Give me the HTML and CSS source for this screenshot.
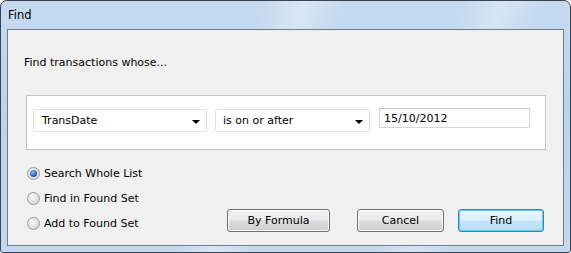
FILE: index.html
```html
<!DOCTYPE html>
<html lang="en">
<head>
  <meta charset="UTF-8" />
  <title>Find</title>
  <link rel="stylesheet" href="styles.css">
</head>
<body>
  <div class="window">
    <div class="titlebar">Find</div>
    <div class="client">
      <p class="prompt">Find transactions whose...</p>

      <div class="criteria">
        <div class="combo field-combo">
          <span>TransDate</span>
          <span class="arrow"></span>
        </div>
        <div class="combo op-combo">
          <span>is on or after</span>
          <span class="arrow"></span>
        </div>
        <div class="textbox">15/10/2012</div>
      </div>

      <div class="bottom">
        <div class="radios">
          <label class="radio checked"><span class="dot"></span>Search Whole List</label>
          <label class="radio"><span class="dot"></span>Find in Found Set</label>
          <label class="radio"><span class="dot"></span>Add to Found Set</label>
        </div>
        <div class="buttons">
          <button class="btn formula">By Formula</button>
          <button class="btn cancel">Cancel</button>
          <button class="btn default">Find</button>
        </div>
      </div>
    </div>
  </div>
</body>
</html>
```

FILE: styles.css
```css
body {
  margin: 0;
  background: #fff;
  font-family: "DejaVu Sans", sans-serif;
  font-size: 11px;
  color: #000;
}
.window {
  width: 571px;
  height: 253px;
  box-sizing: border-box;
  border: 1px solid #3c4350;
  border-radius: 7px 7px 3px 3px;
  padding: 0 6px 6px 6px;
  background:
    linear-gradient(110deg, transparent 0 40%, rgba(255,255,255,0.35) 46%, transparent 52%, transparent 70%, rgba(255,255,255,0.3) 76%, transparent 82%),
    linear-gradient(180deg, #c6dbf0 0%, #bcd3ec 40%, #c3d8ee 100%);
  display: flex;
  flex-direction: column;
}
.titlebar {
  height: 28px;
  line-height: 29px;
  padding-left: 1px;
  font-size: 11.5px;
  color: #000;
}
.client {
  flex: 1;
  border: 1px solid #6f7c8c;
  background: #f0f0f0;
  padding: 0 19px 12px 18px;
  display: flex;
  flex-direction: column;
}
.prompt {
  margin: 26px 0 0 -2px;
  height: 14px;
  line-height: 14px;
}
.criteria {
  margin-top: 25px;
  border: 1px solid #c4c4c4;
  background: #fff;
  display: flex;
  align-items: flex-start;
  padding: 13px 0 0 6px;
  box-sizing: border-box;
  width: 520px;
  height: 55px;
}
.combo {
  height: 23px;
  box-sizing: border-box;
  border: 1px solid #dcdfe3;
  border-radius: 2px;
  background: #fff;
  display: flex;
  align-items: center;
  justify-content: space-between;
  padding: 0 6px 0 8px;
}
.field-combo { width: 174px; }
.op-combo { width: 155px; margin-left: 8px; padding-left: 7px; }
.arrow {
  width: 0;
  height: 0;
  border-left: 4px solid transparent;
  border-right: 4px solid transparent;
  border-top: 4px solid #000;
  margin-top: 2px;
}
.textbox {
  width: 151px;
  height: 20px;
  box-sizing: border-box;
  margin: -1px 0 0 9px;
  border: 1px solid #d3d7dc;
  border-top-color: #c0c4ca;
  background: #fff;
  padding: 0 4px;
  line-height: 19px;
}
.bottom {
  flex: 1;
  display: flex;
  justify-content: space-between;
  align-items: flex-end;
}
.radios {
  display: flex;
  flex-direction: column;
  gap: 11px;
  margin-left: 1px;
  padding-bottom: 3px;
}
.radio {
  display: flex;
  align-items: center;
  height: 14px;
}
.dot {
  width: 13px;
  height: 13px;
  box-sizing: border-box;
  border-radius: 50%;
  border: 1px solid #9a9a9a;
  background: radial-gradient(circle at 40% 35%, #f8f8f8 0%, #dadada 70%, #cfcfcf 100%);
  margin-right: 4px;
  position: relative;
}
.checked .dot::after {
  content: "";
  position: absolute;
  left: 2px;
  top: 2px;
  width: 7px;
  height: 7px;
  border-radius: 50%;
  background: radial-gradient(circle at 40% 35%, #8fc1f0 0%, #2766b8 55%, #173e7a 100%);
}
.buttons {
  display: flex;
  margin-bottom: 1px;
}
.btn {
  height: 23px;
  box-sizing: border-box;
  font-family: "DejaVu Sans", sans-serif;
  font-size: 11px;
  color: #000;
  border: 1px solid #707070;
  border-radius: 3px;
  background: linear-gradient(180deg, #f2f2f2 0%, #ebebeb 48%, #dddddd 52%, #cfcfcf 100%);
  box-shadow: inset 0 0 0 1px rgba(255,255,255,0.8);
  padding: 0;
}
.formula { width: 103px; }
.cancel { width: 87px; margin-left: 27px; }
.default {
  width: 86px;
  margin-left: 14px;
  border-color: #3c7fb1;
  background: linear-gradient(180deg, #e8f5fc 0%, #dcf0fb 48%, #c4e5f8 52%, #b6dcf4 100%);
  box-shadow: inset 0 0 0 1px #5fd0f5;
}
```
